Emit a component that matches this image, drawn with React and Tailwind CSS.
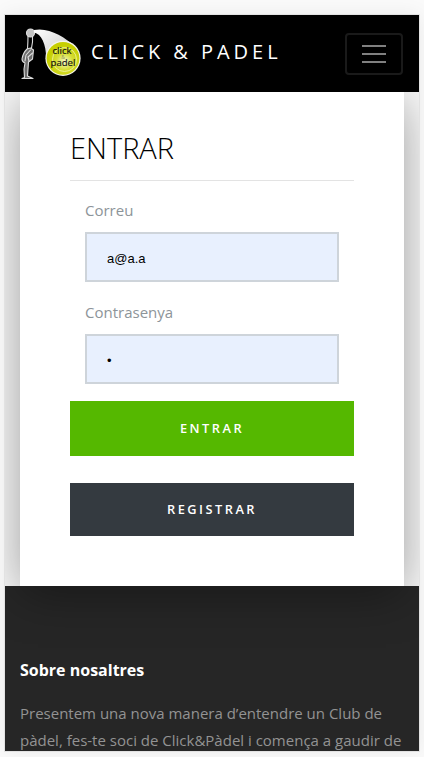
// src/App.jsx
const Logo = () => (
  <svg width="60" height="52" viewBox="0 0 60 52" className="shrink-0">
    <defs>
      <linearGradient id="beam" x1="0" y1="0" x2="1" y2="1">
        <stop offset="0" stopColor="#ffffff" />
        <stop offset="0.55" stopColor="#dcdcdc" />
        <stop offset="1" stopColor="#ffffff" />
      </linearGradient>
      <radialGradient id="ball" cx="0.55" cy="0.6" r="0.5">
        <stop offset="0" stopColor="#f6f8cc" />
        <stop offset="0.5" stopColor="#d6dd35" />
        <stop offset="1" stopColor="#c6cf00" />
      </radialGradient>
    </defs>
    {/* padel player */}
    <g stroke="#dedede" strokeWidth="1.1" strokeLinecap="round" strokeLinejoin="round">
      <path d="M7 8 Q7 14 6.5 21 M11.5 8 Q12 14 10.5 20" fill="none" />
      <path d="M6 21 Q2 25 1 31 Q1 34 4 35 L3 41 L3.5 49.5 L1 50.5 L12 50.5 L6.5 48 L7 41 L7.5 34 L11.5 31 L12.5 22 L9.5 20 Z" fill="#6e6e6e" />
      <path d="M9.5 22 L5 27 L4 33 M11.5 25 L7 29 L8 33" fill="none" />
      <circle cx="9.5" cy="5" r="4" fill="#c4c4c4" />
    </g>
    <path d="M13 2 C28 -1 43 9 54 18 L25 34 C26 18 21 6 13 4.5 Z" fill="url(#beam)" />
    <circle cx="42" cy="30.3" r="17.6" fill="#f4f4ea" />
    <circle cx="42" cy="30.3" r="16.4" fill="url(#ball)" />
    <circle cx="43.5" cy="31.5" r="12" fill="none" stroke="#edf09c" strokeWidth="0.9" />
    <text x="41" y="26" textAnchor="middle" fontSize="9.6" fontFamily="Open Sans, sans-serif" fill="#111" stroke="#111" strokeWidth="0.15">click</text>
    <text x="42" y="31.3" textAnchor="middle" fontSize="5" fontFamily="Open Sans, sans-serif" fill="#8c8f5a">&amp;</text>
    <text x="42" y="38" textAnchor="middle" fontSize="9.6" fontFamily="Open Sans, sans-serif" fill="#111" stroke="#111" strokeWidth="0.15">padel</text>
  </svg>
);

const Navbar = () => (
  <nav className="flex h-[77px] shrink-0 items-center justify-between bg-black px-4">
    <a href="#" className="flex items-center gap-[10px]">
      <Logo />
      <span className="pb-1 text-[20px] leading-7 tracking-[3.95px] text-white">CLICK &amp; PADEL</span>
    </a>
    <button aria-label="Menu" className="flex h-[42px] w-[58px] items-center justify-center rounded-[4px] border-2 border-[#1a1a1a]">
      <span className="flex w-6 flex-col gap-[6px]">
        <span className="h-0.5 bg-[#808080]" />
        <span className="h-0.5 bg-[#808080]" />
        <span className="h-0.5 bg-[#808080]" />
      </span>
    </button>
  </nav>
);

const Field = ({ label, type, value }) => (
  <label className="block px-[15px]">
    <span className="block text-[15px] leading-[27px] text-[#8d9499]">{label}</span>
    <input
      type={type}
      defaultValue={value}
      className="mt-2 block h-[50px] w-full border-2 border-[#ced4da] bg-[#e8f0fe] px-5 pt-0.5 font-['Liberation_Sans',Arial,sans-serif] text-[13px] text-black outline-none"
    />
  </label>
);

const LoginForm = () => (
  <form className="relative mx-[15px] h-[494px] bg-white px-[50px] pt-[35px] shadow-[0_8px_46px_-2px_rgba(0,0,0,0.4)]">
    <h1 className="h-[54px] border-b border-[#e3e3e3] text-[29px] leading-[41px] font-light text-black">ENTRAR</h1>
    <div className="flex flex-col gap-[17px] pt-4">
      <Field label="Correu" type="text" value="a@a.a" />
      <Field label="Contrasenya" type="password" value="a" />
    </div>
    <button type="button" className="mt-[17px] block h-[55px] w-full bg-[#55b800] text-[12.8px] font-semibold tracking-[2.5px] text-white">
      ENTRAR
    </button>
    <button type="button" className="mt-[27px] block h-[53px] w-full bg-[#343a40] text-[12.8px] font-semibold tracking-[2.5px] text-white">
      REGISTRAR
    </button>
  </form>
);

const Footer = () => (
  <footer className="flex-1 bg-[#262626] px-[15px] pt-[71px]">
    <h2 className="text-base leading-[27px] font-bold text-white">Sobre nosaltres</h2>
    <p className="mt-4 text-[15px] leading-[27px] whitespace-nowrap text-[#939393]">
      Presentem una nova manera d’entendre un Club de
      <br />
      pàdel, fes-te soci de Click&amp;Pàdel i comença a gaudir de
    </p>
  </footer>
);

const App = () => {
  return (
    <div className="h-[757px] w-[424px] overflow-hidden bg-[#fafafa] px-[5px] pt-[15px] font-['Open_Sans',sans-serif]">
      <div className="h-[736px] shadow-[0_0_0_1px_#e2e2e2,0_0_20px_rgba(0,0,0,0.07)]">
        <div className="flex h-full flex-col overflow-hidden bg-[#f8f8f8]">
          <div className="relative z-10 flex flex-col">
            <div className="relative z-10 flex flex-col">
              <Navbar />
            </div>
            <LoginForm />
          </div>
          <Footer />
        </div>
      </div>
    </div>
  );
};

export default App;
